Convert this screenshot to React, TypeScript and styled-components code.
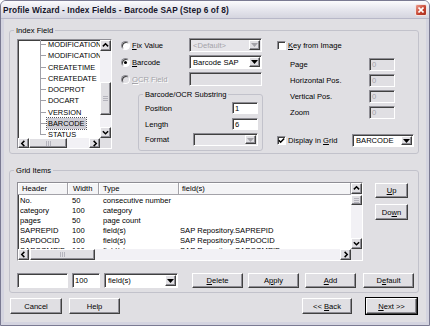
import styled, { createGlobalStyle, css } from "styled-components";

const FACE = "#e0dfe3";
const SHADOW = "#8e8d94";
const DARK = "#404040";

const GlobalStyle = createGlobalStyle`
  html, body { margin: 0; padding: 0; }
  body {
    font-family: "Liberation Sans", Arial, sans-serif;
    font-size: 7.6px;
    color: #000;
    background: #fff;
  }
  * { box-sizing: border-box; }
`;

const raised = css`
  background: ${FACE};
  border: 1px solid;
  border-color: #fff ${DARK} ${DARK} #fff;
  box-shadow: inset -1px -1px ${SHADOW};
`;

const sunken = css`
  border: 1px solid;
  border-color: ${SHADOW} #fff #fff ${SHADOW};
  box-shadow: inset 1px 1px ${DARK};
`;

const Window = styled.div`
  width: 430px;
  height: 326px;
  border: 1px solid #7a7a92;
  border-radius: 6px 6px 0 0;
  background: #d4d4e0;
  display: flex;
  flex-direction: column;
  overflow: hidden;
`;

const TitleBar = styled.div`
  height: 18px;
  flex: none;
  display: flex;
  align-items: center;
  padding: 0 2px 0 2px;
  background: linear-gradient(#fbfbfd, #e8e8ef 45%, #d5d5df);
  border-bottom: 1px solid #b8b8c8;
`;

const Title = styled.span`
  flex: 1;
  font-weight: bold;
  font-size: 8.3px;
  letter-spacing: 0.1px;
  color: #15152a;
  white-space: nowrap;
`;

const CloseBtn = styled.div`
  width: 12px;
  height: 12px;
  border-radius: 2px;
  border: 1px solid #f4e4e4;
  background: linear-gradient(135deg, #ec9a8a, #c2402e 60%, #a8301f);
  display: flex;
  align-items: center;
  justify-content: center;
`;

const Client = styled.div`
  flex: 1;
  margin: 0 3px 3px;
  background: ${FACE};
  display: flex;
  flex-direction: column;
  padding-top: 6px;
`;

const Group = styled.fieldset<{ $w: number; $h: number; $ml?: number; $mt?: number }>`
  flex: none;
  width: ${(p) => p.$w}px;
  height: ${(p) => p.$h}px;
  margin: ${(p) => p.$mt ?? 0}px 0 0 ${(p) => p.$ml ?? 0}px;
  padding: 0;
  min-width: 0;
  border: 1px solid #c2c2cb;
  border-radius: 3px;
`;

const Legend = styled.legend`
  padding: 0 2px;
  margin-left: 4px;
  line-height: 11px;
  font-size: 7.6px;
`;

const IndexBody = styled.div`
  display: flex;
  align-items: flex-start;
  padding: 3px 0 0 7px;
`;

/* ---------- scroll parts ---------- */

const ListFrame = styled.div<{ $w: number; $h: number; $hs: number }>`
  flex: none;
  width: ${(p) => p.$w}px;
  height: ${(p) => p.$h}px;
  ${sunken};
  background: #fff;
  display: grid;
  grid-template-columns: 1fr 11px;
  grid-template-rows: 1fr ${(p) => p.$hs}px;
  overflow: hidden;
`;

const Pane = styled.div`
  overflow: hidden;
  min-width: 0;
  min-height: 0;
`;

const VTrack = styled.div`
  display: flex;
  flex-direction: column;
  background: #f2f1f5;
  min-height: 0;
`;

const HTrack = styled.div`
  display: flex;
  background: #f2f1f5;
  min-width: 0;
`;

const ArrowBtn = styled.div`
  flex: none;
  width: 11px;
  height: 11px;
  ${raised};
  display: flex;
  align-items: center;
  justify-content: center;
`;

const HArrowBtn = styled(ArrowBtn)`
  height: 100%;
`;

const Thumb = styled.div<{ $v?: boolean; $offset: number; $size: number }>`
  flex: none;
  ${raised};
  display: flex;
  align-items: center;
  justify-content: center;
  ${(p) =>
    p.$v
      ? css`
          height: ${p.$size}px;
          margin-top: ${p.$offset}px;
        `
      : css`
          width: ${p.$size}px;
          margin-left: ${p.$offset}px;
        `}
`;

const Fill = styled.div`
  flex: 1;
`;

const Corner = styled.div`
  background: ${FACE};
`;

const Chevron = ({ dir }: { dir: "up" | "down" | "left" | "right" }) => {
  const pts = {
    up: "1,5 4,2 7,5",
    down: "1,2.5 4,5.5 7,2.5",
    left: "5,1 2,4 5,7",
    right: "3,1 6,4 3,7",
  }[dir];
  return (
    <svg width="7" height="7" viewBox="0 0 8 8">
      <polyline points={pts} fill="none" stroke="#000" strokeWidth="1.7" />
    </svg>
  );
};

const Grip = ({ v }: { v?: boolean }) =>
  v ? (
    <svg width="5" height="5" viewBox="0 0 5 5">
      <path d="M0 0.5h5M0 2.5h5M0 4.5h5" stroke="#b4b3bc" strokeWidth="1" />
    </svg>
  ) : (
    <svg width="5" height="5" viewBox="0 0 5 5">
      <path d="M0.5 0v5M2.5 0v5M4.5 0v5" stroke="#b4b3bc" strokeWidth="1" />
    </svg>
  );

const VScroll = ({ offset, size }: { offset: number; size: number }) => (
  <VTrack>
    <ArrowBtn>
      <Chevron dir="up" />
    </ArrowBtn>
    <Thumb $v $offset={offset} $size={size}>
      <Grip v />
    </Thumb>
    <Fill />
    <ArrowBtn>
      <Chevron dir="down" />
    </ArrowBtn>
  </VTrack>
);

const HScroll = ({ offset, size }: { offset: number; size: number }) => (
  <HTrack>
    <HArrowBtn>
      <Chevron dir="left" />
    </HArrowBtn>
    <Thumb $offset={offset} $size={size}>
      <Grip />
    </Thumb>
    <Fill />
    <HArrowBtn>
      <Chevron dir="right" />
    </HArrowBtn>
  </HTrack>
);

/* ---------- tree ---------- */

const TreeList = styled.div`
  margin-top: -1px;
  padding-left: 22px;
`;

const TreeRow = styled.div`
  display: flex;
  align-items: center;
  height: 11.25px;
  white-space: nowrap;
  font-size: 7.4px;
`;

const Connector = styled.span<{ $last?: boolean }>`
  flex: none;
  width: 7px;
  align-self: stretch;
  background:
    linear-gradient(#a0a0a8, #a0a0a8) left top / 1px ${(p) => (p.$last ? "50%" : "100%")} no-repeat,
    linear-gradient(#a0a0a8, #a0a0a8) left center / 6px 1px no-repeat;
`;

const TreeText = styled.span<{ $sel?: boolean }>`
  padding: 1px 1px;
  line-height: 9px;
  ${(p) =>
    p.$sel &&
    css`
      background: #cdccd4;
      outline: 1px dotted #55555e;
    `}
`;

/* ---------- controls ---------- */

const Col = styled.div<{ $w: number; $ml: number }>`
  flex: none;
  width: ${(p) => p.$w}px;
  margin: -1px 0 0 ${(p) => p.$ml}px;
  display: flex;
  flex-direction: column;
`;

const MiddleCol = styled(Col)`
  gap: 3px;
`;

const OptionRow = styled.div`
  display: flex;
  align-items: center;
  height: 14px;
`;

const RadioLabel = styled.label`
  flex: none;
  width: 69px;
  padding-left: 1px;
  display: flex;
  align-items: center;
  gap: 2px;
`;

const Radio = styled.span<{ $checked?: boolean; $disabled?: boolean }>`
  flex: none;
  width: 9px;
  height: 9px;
  border-radius: 50%;
  border: 1px solid;
  border-color: ${SHADOW} #fff #fff ${SHADOW};
  box-shadow: inset 1px 1px ${DARK};
  background: ${(p) => (p.$disabled ? FACE : "#fff")};
  display: flex;
  align-items: center;
  justify-content: center;
  &::after {
    content: "";
    width: 3px;
    height: 3px;
    border-radius: 50%;
    background: ${(p) => (p.$checked ? "#000" : "transparent")};
  }
`;

const Text = styled.span<{ $disabled?: boolean }>`
  white-space: nowrap;
  ${(p) =>
    p.$disabled &&
    css`
      color: #a3a2a8;
      text-shadow: 1px 1px #fff;
    `}
`;

const Combo = styled.div<{ $w: number; $h: number; $disabled?: boolean; $ml?: number }>`
  flex: none;
  width: ${(p) => p.$w}px;
  height: ${(p) => p.$h}px;
  margin-left: ${(p) => (p.$ml === undefined ? "0" : p.$ml < 0 ? "auto" : `${p.$ml}px`)};
  ${sunken};
  background: ${(p) => (p.$disabled ? "#e6e5e9" : "#fff")};
  color: ${(p) => (p.$disabled ? "#a3a2a8" : "#000")};
  display: flex;
  align-items: center;
  padding: 1px 1px 1px 3px;
`;

const ComboText = styled.span`
  flex: 1;
  overflow: hidden;
  white-space: nowrap;
`;

const DropBtn = styled.span`
  flex: none;
  width: 11px;
  align-self: stretch;
  ${raised};
  display: flex;
  align-items: center;
  justify-content: center;
`;

const DropArrow = ({ disabled }: { disabled?: boolean }) => (
  <svg width="7" height="4" viewBox="0 0 7 4">
    <polygon points="0,0 7,0 3.5,4" fill={disabled ? "#a3a2a8" : "#000"} />
  </svg>
);

const Edit = styled.div<{ $w: number; $h: number; $disabled?: boolean; $ml?: number }>`
  flex: none;
  width: ${(p) => p.$w}px;
  height: ${(p) => p.$h}px;
  margin-left: ${(p) => p.$ml ?? 0}px;
  ${sunken};
  background: ${(p) => (p.$disabled ? FACE : "#fff")};
  color: ${(p) => (p.$disabled ? "#a3a2a8" : "#000")};
  display: flex;
  align-items: center;
  padding-left: 2px;
  white-space: nowrap;
  overflow: hidden;
`;

const SubBody = styled.div`
  display: flex;
  flex-direction: column;
  padding: 2px 4px 0 6px;
`;

const SubRow = styled.div<{ $mt: number; $h: number }>`
  display: flex;
  align-items: center;
  justify-content: space-between;
  height: ${(p) => p.$h}px;
  margin-top: ${(p) => p.$mt}px;
`;

const CheckRow = styled.label<{ $mt?: number; $h: number }>`
  display: flex;
  align-items: center;
  height: ${(p) => p.$h}px;
  margin-top: ${(p) => p.$mt ?? 0}px;
  gap: 2px;
`;

const CheckBox = styled.span`
  flex: none;
  width: 9px;
  height: 9px;
  ${sunken};
  background: #fff;
  display: flex;
  align-items: center;
  justify-content: center;
`;

const FieldRow = styled.div<{ $mt: number }>`
  display: flex;
  align-items: center;
  height: 13px;
  margin-top: ${(p) => p.$mt}px;
`;

const FieldLabel = styled.span`
  flex: none;
  width: 92px;
  padding-left: 13px;
  white-space: nowrap;
`;

/* ---------- grid ---------- */

const GridBody = styled.div`
  display: flex;
  flex-direction: column;
  padding: 6px 0 0 7px;
`;

const TopRow = styled.div`
  display: flex;
  align-items: flex-start;
`;

const SideButtons = styled.div`
  flex: none;
  width: 33px;
  margin-left: 12px;
  display: flex;
  flex-direction: column;
`;

const HeaderRow = styled.div`
  display: flex;
  height: 12px;
`;

const HeadCell = styled.div<{ $w?: number; $pl: number }>`
  flex: ${(p) => (p.$w ? `0 0 ${p.$w}px` : "1")};
  background: #f4f4f6;
  border-right: 1px solid #a3a2a8;
  border-bottom: 1px solid #a3a2a8;
  box-shadow: inset 1px 1px #fff;
  padding-left: ${(p) => p.$pl}px;
  display: flex;
  align-items: center;
  white-space: nowrap;
`;

const DataRow = styled.div`
  display: flex;
  height: 10px;
  align-items: center;
`;

const DataCell = styled.div<{ $w?: number; $pl: number }>`
  flex: ${(p) => (p.$w ? `0 0 ${p.$w}px` : "1")};
  padding-left: ${(p) => p.$pl}px;
  white-space: nowrap;
  overflow: hidden;
`;

const BottomRow = styled.div`
  display: flex;
  align-items: center;
  height: 15px;
  margin-top: 12px;
`;

const Button = styled.div<{ $w: number; $h: number; $ml?: number; $mt?: number; $default?: boolean }>`
  flex: none;
  width: ${(p) => p.$w}px;
  height: ${(p) => p.$h}px;
  margin-left: ${(p) => p.$ml ?? 0}px;
  margin-top: ${(p) => p.$mt ?? 0}px;
  ${raised};
  display: flex;
  align-items: center;
  justify-content: center;
  white-space: pre;
  ${(p) =>
    p.$default &&
    css`
      outline: 1px solid #000;
    `}
`;

const ButtonBar = styled.div`
  display: flex;
  align-items: center;
  height: 16px;
  margin-top: 5px;
  padding: 0 9px 0 6px;
`;

const treeItems = [
  "MODIFICATION",
  "MODIFICATION",
  "CREATETIME",
  "CREATEDATE",
  "DOCPROT",
  "DOCART",
  "VERSION",
  "BARCODE",
  "STATUS",
];

const gridRows = [
  ["No.", "50", "consecutive number", ""],
  ["category", "100", "category", ""],
  ["pages", "50", "page count", ""],
  ["SAPREPID", "100", "field(s)", "SAP Repository.SAPREPID"],
  ["SAPDOCID", "100", "field(s)", "SAP Repository.SAPDOCID"],
  ["SAPCOMPID", "100", "field(s)", "SAP Repository.SAPCOMPID"],
];

const keyFields = ["Page", "Horizontal Pos.", "Vertical Pos.", "Zoom"];

export default function App() {
  return (
    <>
      <GlobalStyle />
      <Window>
        <TitleBar>
          <Title>Profile Wizard - Index Fields - Barcode SAP (Step 6 of 8)</Title>
          <CloseBtn>
            <svg width="6" height="6" viewBox="0 0 6 6">
              <path d="M0.5 0.5L5.5 5.5M5.5 0.5L0.5 5.5" stroke="#fff" strokeWidth="1.6" />
            </svg>
          </CloseBtn>
        </TitleBar>
        <Client>
          <Group $w={410} $h={129} $ml={5}>
            <Legend>Index Field</Legend>
            <IndexBody>
              <ListFrame $w={95} $h={110} $hs={10}>
                <Pane>
                  <TreeList>
                    {treeItems.map((t, i) => (
                      <TreeRow key={i}>
                        <Connector $last={i === treeItems.length - 1} />
                        <TreeText $sel={t === "BARCODE"}>{t}</TreeText>
                      </TreeRow>
                    ))}
                  </TreeList>
                </Pane>
                <VScroll offset={31} size={33} />
                <HScroll offset={0} size={38} />
                <Corner />
              </ListFrame>

              <MiddleCol $w={143} $ml={8}>
                <OptionRow>
                  <RadioLabel>
                    <Radio />
                    <Text>
                      <u>F</u>ix Value
                    </Text>
                  </RadioLabel>
                  <Combo $w={73} $h={14} $disabled>
                    <ComboText>&lt;Default&gt;</ComboText>
                    <DropBtn>
                      <DropArrow disabled />
                    </DropBtn>
                  </Combo>
                </OptionRow>
                <OptionRow>
                  <RadioLabel>
                    <Radio $checked />
                    <Text>
                      <u>B</u>arcode
                    </Text>
                  </RadioLabel>
                  <Combo $w={73} $h={14}>
                    <ComboText>Barcode SAP</ComboText>
                    <DropBtn>
                      <DropArrow />
                    </DropBtn>
                  </Combo>
                </OptionRow>
                <OptionRow>
                  <RadioLabel>
                    <Radio $disabled />
                    <Text $disabled>
                      <u>O</u>CR Field
                    </Text>
                  </RadioLabel>
                  <Edit $w={73} $h={14} $disabled />
                </OptionRow>
                <Group $w={125} $h={62} $ml={18}>
                  <Legend>Barcode/OCR Substring</Legend>
                  <SubBody>
                    <SubRow $mt={0} $h={12}>
                      <Text>Position</Text>
                      <Edit $w={26} $h={12}>1</Edit>
                    </SubRow>
                    <SubRow $mt={4} $h={12}>
                      <Text>Length</Text>
                      <Edit $w={26} $h={12}>6</Edit>
                    </SubRow>
                    <SubRow $mt={3} $h={13}>
                      <Text>Format</Text>
                      <Combo $w={65} $h={13} $disabled>
                        <ComboText />
                        <DropBtn>
                          <DropArrow disabled />
                        </DropBtn>
                      </Combo>
                    </SubRow>
                  </SubBody>
                </Group>
              </MiddleCol>

              <Col $w={137} $ml={14}>
                <CheckRow $h={14}>
                  <CheckBox />
                  <Text>
                    <u>K</u>ey from Image
                  </Text>
                </CheckRow>
                {keyFields.map((f, i) => (
                  <FieldRow key={f} $mt={i === 0 ? 6 : 3}>
                    <FieldLabel>{f}</FieldLabel>
                    <Edit $w={26} $h={13} $disabled>
                      0
                    </Edit>
                  </FieldRow>
                ))}
                <CheckRow $h={13} $mt={15}>
                  <CheckBox>
                    <svg width="7" height="7" viewBox="0 0 7 7">
                      <polyline points="0.8,3.3 2.6,5.2 6.2,1.4" fill="none" stroke="#000" strokeWidth="1.5" />
                    </svg>
                  </CheckBox>
                  <Text>
                    Display in <u>G</u>rid
                  </Text>
                  <Combo $w={62} $h={13} $ml={-1}>
                    <ComboText>BARCODE</ComboText>
                    <DropBtn>
                      <DropArrow />
                    </DropBtn>
                  </Combo>
                </CheckRow>
              </Col>
            </IndexBody>
          </Group>

          <Group $w={410} $h={128} $ml={5} $mt={11}>
            <Legend>Grid Items</Legend>
            <GridBody>
              <TopRow>
                <ListFrame $w={346} $h={79} $hs={11}>
                  <Pane>
                    <HeaderRow>
                      <HeadCell $w={50} $pl={4}>Header</HeadCell>
                      <HeadCell $w={31} $pl={5}>Width</HeadCell>
                      <HeadCell $w={80} $pl={4}>Type</HeadCell>
                      <HeadCell $pl={3}>field(s)</HeadCell>
                    </HeaderRow>
                    {gridRows.map((r) => (
                      <DataRow key={r[0]}>
                        <DataCell $w={50} $pl={2}>{r[0]}</DataCell>
                        <DataCell $w={31} $pl={4}>{r[1]}</DataCell>
                        <DataCell $w={80} $pl={4}>{r[2]}</DataCell>
                        <DataCell $pl={1}>{r[3]}</DataCell>
                      </DataRow>
                    ))}
                  </Pane>
                  <VScroll offset={1} size={10} />
                  <HScroll offset={1} size={65} />
                  <Corner />
                </ListFrame>
                <SideButtons>
                  <Button $w={33} $h={15} $mt={1}>
                    <u>U</u>p
                  </Button>
                  <Button $w={33} $h={16} $mt={6}>
                    Do<u>w</u>n
                  </Button>
                </SideButtons>
              </TopRow>
              <BottomRow>
                <Edit $w={51} $h={15} />
                <Edit $w={28} $h={15} $ml={4}>
                  100
                </Edit>
                <Combo $w={74} $h={15} $ml={4}>
                  <ComboText>field(s)</ComboText>
                  <DropBtn>
                    <DropArrow />
                  </DropBtn>
                </Combo>
                <Button $w={51} $h={15} $ml={14}>
                  <u>D</u>elete
                </Button>
                <Button $w={51} $h={15} $ml={5}>
                  A<u>p</u>ply
                </Button>
                <Button $w={51} $h={15} $ml={6}>
                  <u>A</u>dd
                </Button>
                <Button $w={51} $h={15} $ml={7}>
                  D<u>e</u>fault
                </Button>
              </BottomRow>
            </GridBody>
          </Group>

          <ButtonBar>
            <Button $w={52} $h={16}>
              Cancel
            </Button>
            <Button $w={51} $h={16} $ml={7}>
              Help
            </Button>
            <Fill />
            <Button $w={50} $h={16}>
              {"<< "}
              <u>B</u>ack
            </Button>
            <Button $w={51} $h={16} $ml={14} $default>
              <u>N</u>ext{" >>"}
            </Button>
          </ButtonBar>
        </Client>
      </Window>
    </>
  );
}
